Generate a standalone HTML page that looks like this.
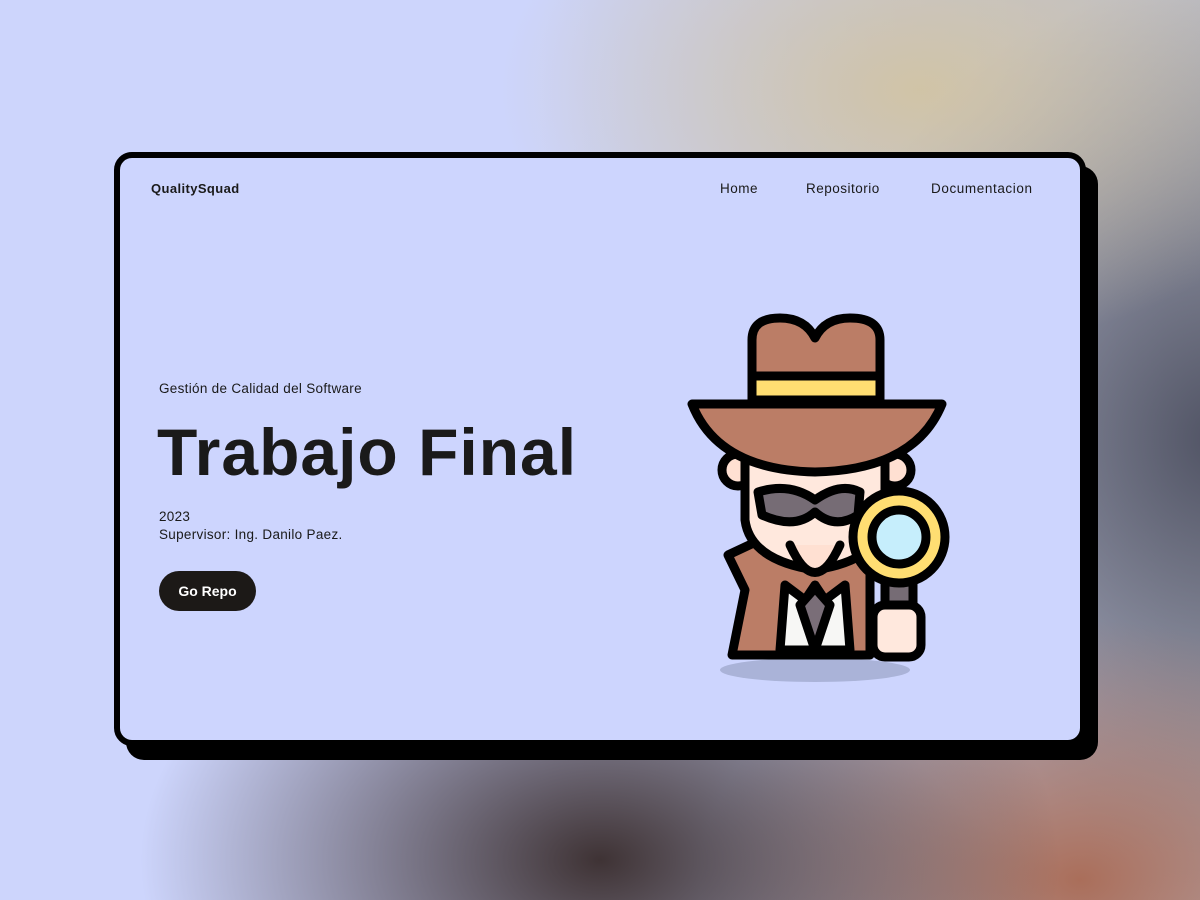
<!DOCTYPE html>
<html><head><meta charset="utf-8"><style>
*{margin:0;padding:0;box-sizing:border-box}
body{width:1200px;height:900px;overflow:hidden;position:relative;font-family:"Liberation Sans",sans-serif;
background:
radial-gradient(ellipse 420px 260px at 920px 90px, rgba(210,195,160,.9), rgba(210,195,160,0) 100%),
radial-gradient(ellipse 460px 300px at 600px 860px, rgba(55,42,42,.95), rgba(55,42,42,0) 100%),
radial-gradient(ellipse 380px 260px at 1080px 880px, rgba(170,110,90,1), rgba(170,110,90,0) 100%),
radial-gradient(ellipse 420px 460px at 1220px 440px, rgba(80,83,100,1), rgba(80,83,100,0) 100%),
linear-gradient(90deg,#cdd5fc 0%,#cdd5fc 45%,#b9bccb 100%);}
.shadow{position:absolute;left:126px;top:166px;width:972px;height:594px;background:#000;border-radius:18px}
.card{position:absolute;left:114px;top:152px;width:972px;height:594px;background:#cdd5fe;border:6px solid #000;border-radius:18px}
.t{position:absolute;color:#1a1a1a;white-space:nowrap}
.btn{position:absolute;left:159px;top:571px;width:97px;height:40px;border-radius:20px;background:#1c1917;color:#fff;font-weight:bold;font-size:14px;line-height:40px;text-align:center}
</style></head><body>
<div class="shadow"></div>
<div class="card"></div>
<div class="t" style="left:151px;top:181px;font-size:13px;font-weight:bold;letter-spacing:.4px">QualitySquad</div>
<div class="t" style="left:720px;top:181px;font-size:13.5px;letter-spacing:.5px">Home</div>
<div class="t" style="left:806px;top:181px;font-size:13.5px;letter-spacing:.5px">Repositorio</div>
<div class="t" style="left:931px;top:181px;font-size:13.5px;letter-spacing:.6px">Documentacion</div>
<div class="t" style="left:159px;top:381px;font-size:13.5px;letter-spacing:.3px">Gestión de Calidad del Software</div>
<div class="t" style="left:157px;top:414px;font-size:66px;font-weight:bold;letter-spacing:1px">Trabajo Final</div>
<div class="t" style="left:159px;top:508px;font-size:13.5px;line-height:18px;letter-spacing:.3px">2023<br>Supervisor: Ing. Danilo Paez.</div>
<div class="btn">Go Repo</div>
<svg width="1200" height="900" style="position:absolute;left:0;top:0" stroke="#000" stroke-width="9" stroke-linejoin="round" stroke-linecap="round">
<ellipse cx="815" cy="670" rx="95" ry="12" fill="#aab3d8" stroke="none"/>
<path d="M732 655 L745 590 L728 555 L760 540 L800 560 L840 540 L870 560 L870 655 Z" fill="#bb7d66"/>
<circle cx="738" cy="470" r="16" fill="#ffe0d2"/>
<circle cx="895" cy="470" r="16" fill="#ffe0d2"/>
<path d="M745 450 L885 450 L885 520 Q880 560 815 570 Q750 560 745 520 Z" fill="#ffe8dd"/>
<path d="M790 545 Q815 600 840 545" fill="#ffe0d2"/>
<path d="M785 585 L805 600 L815 585 L825 600 L845 585 L850 650 L780 650 Z" fill="#f7f7f5"/>
<path d="M800 605 L815 588 L830 605 L815 650 Z" fill="#7a6e78"/>
<path d="M758 492 Q790 482 815 500 Q840 482 860 492 L858 515 Q835 530 815 512 Q795 530 762 515 Z" fill="#766c75"/>
<path d="M752 400 L752 340 Q752 318 780 318 Q805 318 815 338 Q825 318 850 318 Q880 318 880 340 L880 400 Z" fill="#bb7d66"/>
<rect x="752" y="376" width="128" height="24" fill="#ffde72"/>
<path d="M692 404 L942 404 Q915 470 815 472 Q718 470 692 404 Z" fill="#bb7d66"/>
<rect x="885" y="580" width="28" height="30" fill="#766c75"/>
<circle cx="899" cy="537" r="46" fill="#ffde72"/>
<circle cx="899" cy="537" r="27" fill="#c6eefc"/>
<rect x="873" y="605" width="48" height="52" rx="12" fill="#ffe8dd"/>
</svg>
</body></html>
